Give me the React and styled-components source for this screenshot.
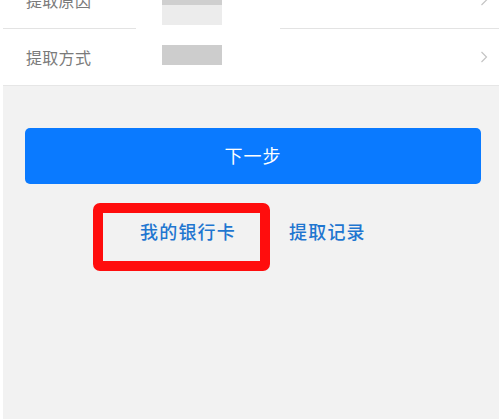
import React from 'react'
import styled, { createGlobalStyle } from 'styled-components'

const GlobalStyle = createGlobalStyle`
  html, body {
    margin: 0;
    padding: 0;
    background: #fff;
    font-family: "Noto Sans CJK SC", "Noto Sans", sans-serif;
  }
`

const rows = ['提取原因', '提取方式']

const Chevron = () => (
  <svg width="8" height="12" viewBox="0 0 8 12">
    <polyline points="1.5,1 6.5,6 1.5,11" fill="none" stroke="#c4c4c4" strokeWidth="1.2" />
  </svg>
)

const App = () => {
  return (
    <>
      <GlobalStyle />
      <Page>
        <Screen>
          <List>
            {rows.map((label) => (
              <Row key={label}>
                <Label>{label}</Label>
                <Chevron />
              </Row>
            ))}
            {/* blurred values laid over the list */}
            <Mosaic>
              <Block $split />
              <Block />
            </Mosaic>
          </List>
          <NextButton>下一步</NextButton>
          <Links>
            <Highlight>
              <Link $indent>我的银行卡</Link>
            </Highlight>
            <Link>提取记录</Link>
          </Links>
        </Screen>
      </Page>
    </>
  )
}

export default App

const Page = styled.div`
  background: #fff;
  padding: 0 1px 0 3px;
  height: 419px;
  box-sizing: border-box;
  overflow: hidden;
`

const Screen = styled.div`
  background: #f2f2f2;
  height: 100%;
  display: flex;
  flex-direction: column;
`

const List = styled.div`
  position: relative;
  margin-top: -28px;
  background: #fff;
  border-bottom: 1px solid #e6e6e6;
`

const Row = styled.div`
  height: 56px;
  display: flex;
  align-items: center;
  justify-content: space-between;
  padding: 0 11px 0 23px;
  & + & {
    border-top: 1px solid #e3e3e3;
  }
`

const Label = styled.span`
  font-size: 16px;
  color: #7a7a7a;
  letter-spacing: 0.3px;
`

const Mosaic = styled.div`
  position: absolute;
  left: 133px;
  top: 28px;
  width: 144px;
  height: 84px;
  background: #fff;
  display: flex;
  flex-direction: column;
  gap: 20px;
  padding-left: 26px;
  box-sizing: border-box;
`

const Block = styled.div`
  width: 60px;
  height: ${(p) => (p.$split ? '25px' : '20px')};
  background: ${(p) =>
    p.$split ? 'linear-gradient(#cfcfcf 0 20%, #ececec 20% 100%)' : '#cdcdcd'};
`

const NextButton = styled.div`
  margin: 42px 18px 0 22px;
  height: 56px;
  padding-bottom: 3px;
  box-sizing: border-box;
  border-radius: 5px;
  background: #0a7aff;
  color: #fff;
  font-size: 18px;
  letter-spacing: 1px;
  display: flex;
  align-items: center;
  justify-content: center;
`

const Links = styled.div`
  display: flex;
  align-items: flex-start;
  margin: 19px 0 0 90px;
`

const Highlight = styled.div`
  border: 10px solid #ff0d0d;
  border-radius: 7px;
  width: 157px;
  height: 48px;
`

const Link = styled.span`
  display: block;
  font-size: 18px;
  font-weight: 500;
  color: #1f76d0;
  line-height: 36px;
  padding-left: ${(p) => (p.$indent ? '37px' : '0')};
  margin-top: ${(p) => (p.$indent ? '0' : '10px')};
  margin-left: ${(p) => (p.$indent ? '0' : '19px')};
  letter-spacing: 1.2px;
`
